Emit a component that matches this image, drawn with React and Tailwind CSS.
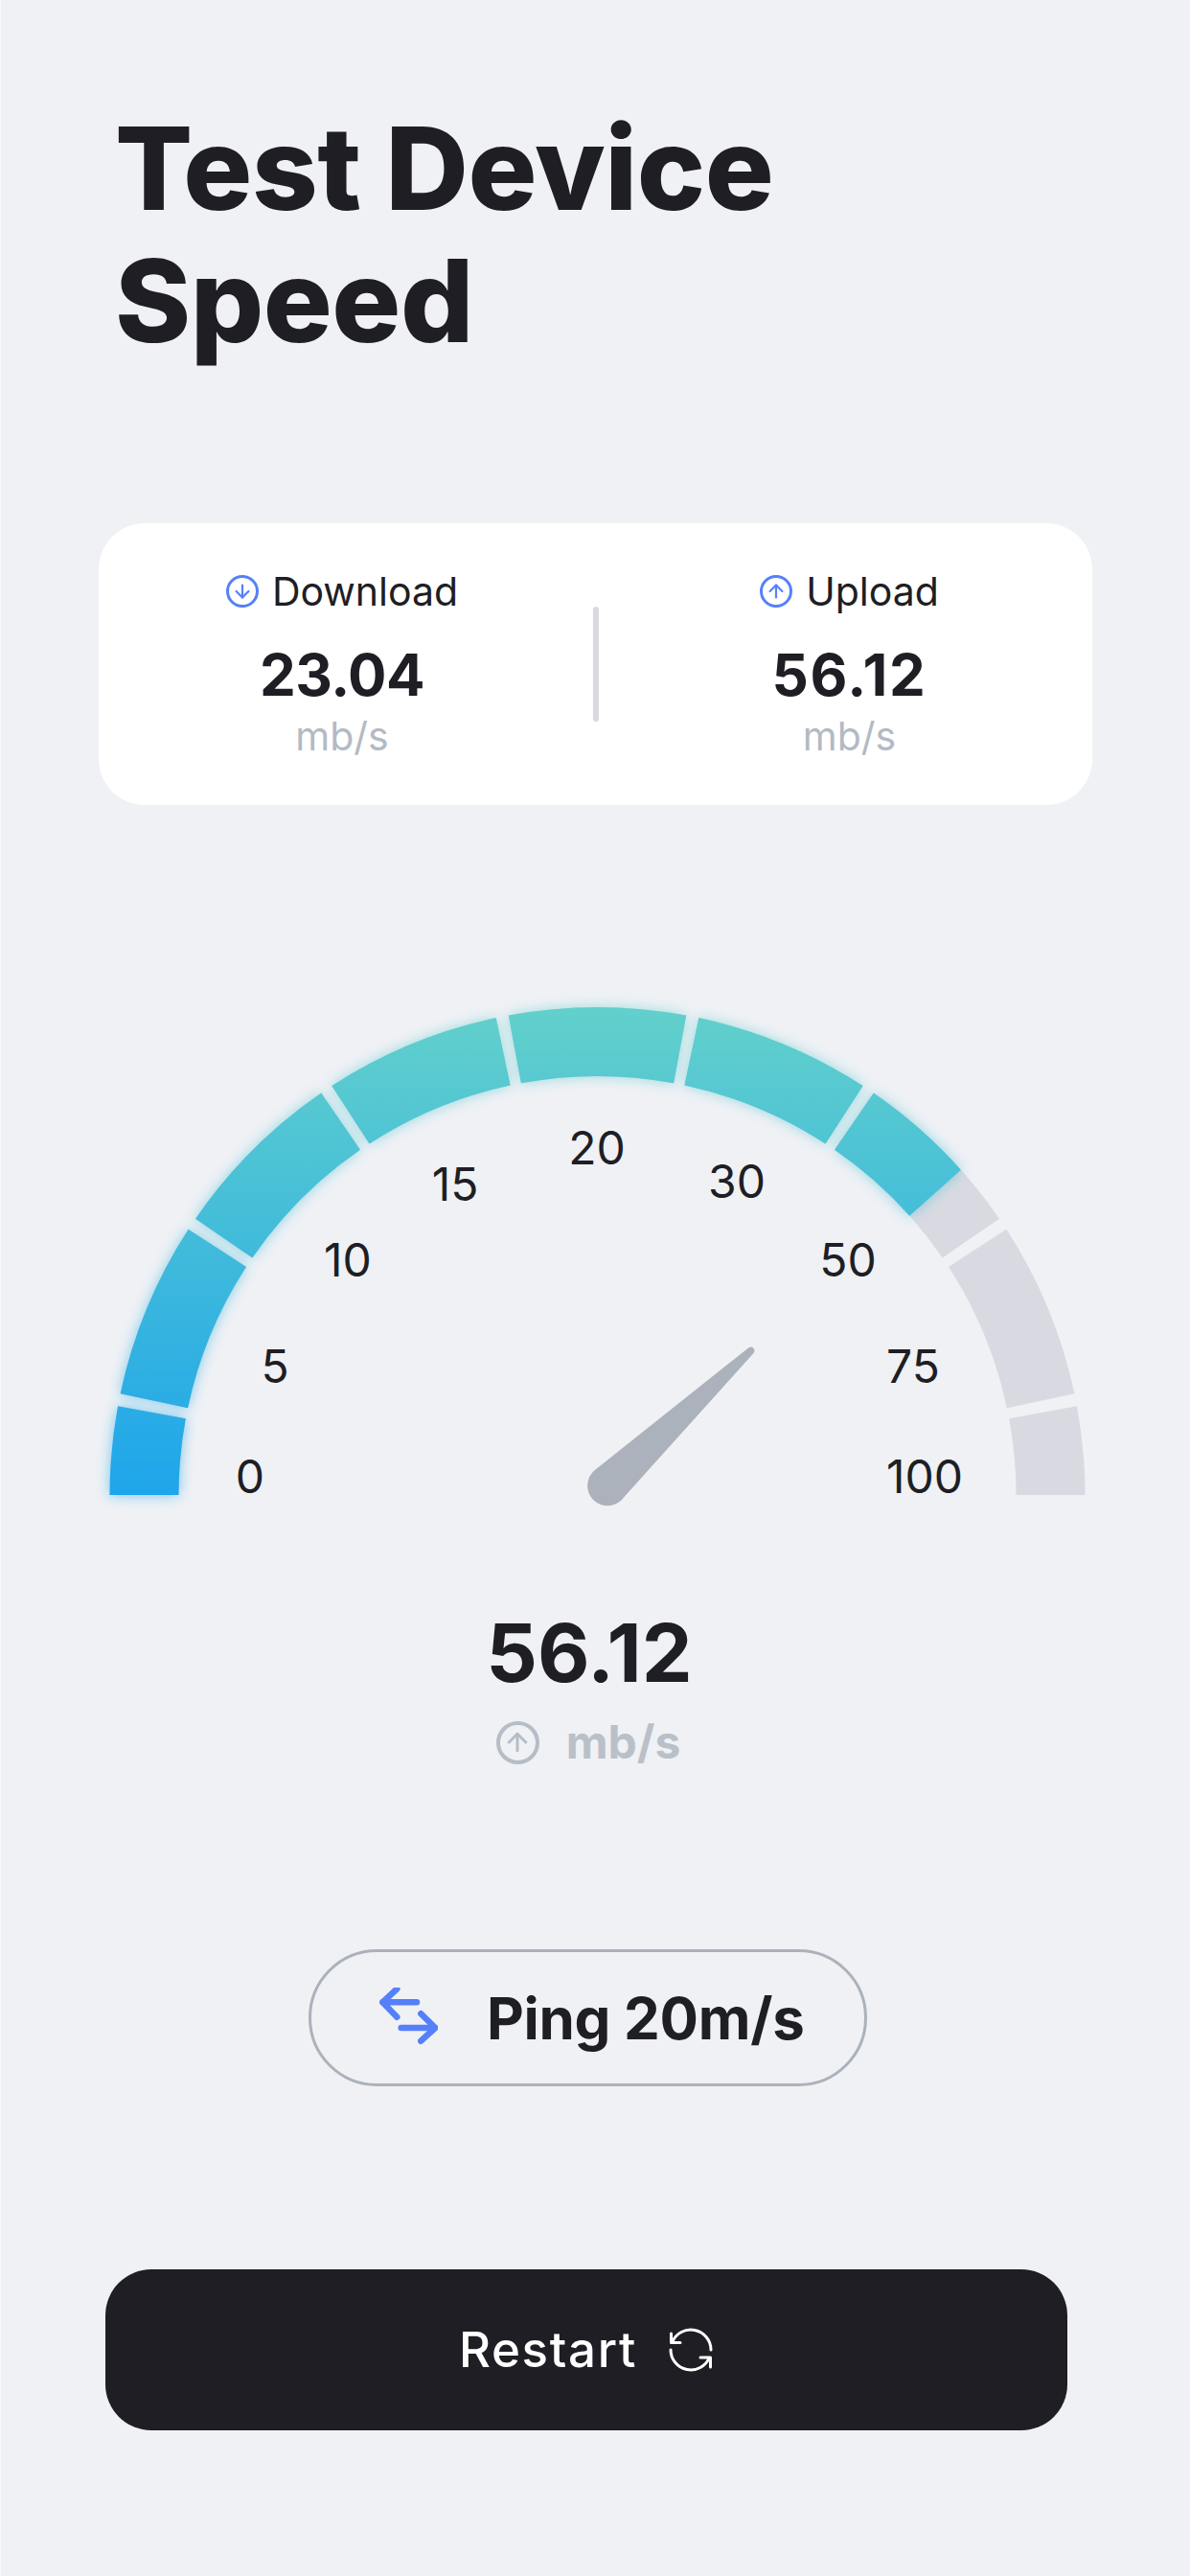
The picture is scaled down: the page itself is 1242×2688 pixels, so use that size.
import { ArrowDown, ArrowUp } from "lucide-react";

const CX = 623.5;
const CY = 1560;
const R_OUT = 509;
const R_IN = 437;

// point on the ring, angle in degrees measured clockwise from the left end
function polar(r, deg) {
  const a = (deg * Math.PI) / 180;
  return [CX - r * Math.cos(a), CY - r * Math.sin(a)];
}

function band(from, to) {
  const [x1, y1] = polar(R_OUT, from);
  const [x2, y2] = polar(R_OUT, to);
  const [x3, y3] = polar(R_IN, to);
  const [x4, y4] = polar(R_IN, from);
  return `M${x1} ${y1}A${R_OUT} ${R_OUT} 0 0 1 ${x2} ${y2}L${x3} ${y3}A${R_IN} ${R_IN} 0 0 0 ${x4} ${y4}Z`;
}

const GAP = 0.75;
const TRACK = [
  [0, 11.25 - GAP],
  [11.25 + GAP, 33.75 - GAP],
  [33.75 + GAP, 56.25 - GAP],
  [56.25 + GAP, 78.75 - GAP],
  [78.75 + GAP, 101.25 - GAP],
  [101.25 + GAP, 123.75 - GAP],
  [123.75 + GAP, 146.25 - GAP],
  [146.25 + GAP, 168.75 - GAP],
  [168.75 + GAP, 180],
];
const ACTIVE_END = 138.2;
const ACTIVE = TRACK.filter(([from]) => from < ACTIVE_END).map(([from, to]) => [from, Math.min(to, ACTIVE_END)]);

const TICKS = [
  ["0", 261, 1558],
  ["5", 287, 1443],
  ["10", 363, 1332],
  ["15", 475, 1253],
  ["20", 623, 1215],
  ["30", 769, 1250],
  ["50", 885, 1332],
  ["75", 953, 1443],
  ["100", 965, 1558],
];

function Gauge() {
  return (
    <svg viewBox="0 1030 1242 550" className="mt-[190px] -ml-px block h-[550px] w-[1242px] shrink-0">
      <defs>
        <linearGradient id="speedFill" gradientUnits="userSpaceOnUse" x1="0" y1="1560" x2="0" y2="1051">
          <stop offset="0" stopColor="#1ea5eb" />
          <stop offset="1" stopColor="#62d0cb" />
        </linearGradient>
        <filter id="speedGlow" x="-10%" y="-10%" width="120%" height="120%">
          <feGaussianBlur stdDeviation="7" />
        </filter>
      </defs>
      {TRACK.map(([from, to]) => (
        <path key={from} d={band(from, to)} fill="#d9dae1" />
      ))}
      <path d={ACTIVE.map(([from, to]) => band(from, to)).join("")} fill="url(#speedFill)" filter="url(#speedGlow)" opacity="0.6" />
      <path d={ACTIVE.map(([from, to]) => band(from, to)).join("")} fill="url(#speedFill)" />
      {TICKS.map(([label, x, y]) => (
        <text key={label} x={x} y={y} textAnchor="middle" fill="#1e1e24" fontSize="48" fontFamily="Inter, sans-serif">
          {label}
        </text>
      ))}
      {/* needle */}
      <path d="M781.7 1406L621.7 1533.3A21 21 0 1 0 651.7 1561.7L786.7 1411.7A3.9 3.9 0 0 0 781.7 1406Z" fill="#abb2bb" />
    </svg>
  );
}

function SpeedStat({ icon: Icon, label, value, className, valueClass }) {
  return (
    <div className={`flex flex-col items-center ${className}`}>
      <div className="-mt-[2px] flex h-[50px] items-center gap-[14px] text-[41px] leading-[50px] text-[#1e1e24]">
        <span className="flex h-[34px] w-[34px] items-center justify-center rounded-full border-[3px] border-[#5580fa]">
          <Icon className="h-[22px] w-[22px] text-[#5580fa]" strokeWidth={2.4} />
        </span>
        {label}
      </div>
      <div className={`mt-[26px] text-[60px] leading-[72px] font-bold text-[#1e1e24] ${valueClass}`}>{value}</div>
      <div className="mt-[3px] text-[41px] leading-[50px] text-[#b3bac4]">mb/s</div>
    </div>
  );
}

export default function App() {
  return (
    <div className="flex h-[2688px] w-[1242px] flex-col border-l border-[#fafafc] bg-[#eff1f5] font-['Inter',sans-serif]">
      <h1 className="mt-[107px] ml-[119px] text-[120px] leading-[138px] font-extrabold tracking-[-0.5px] text-[#1e1e24]">
        Test Device
        <br />
        Speed
      </h1>

      <div className="mt-[163px] ml-[102px] flex h-[294px] w-[1037px] shrink-0 items-center rounded-[48px] bg-white">
        <SpeedStat icon={ArrowDown} label="Download" value="23.04" className="w-[516px] pr-[8px]" valueClass="tracking-[-0.5px]" />
        <div className="h-[120px] w-[6px] shrink-0 rounded-full bg-[#d9dae1]" />
        <SpeedStat icon={ArrowUp} label="Upload" value="56.12" className="w-[515px] pl-[8px]" valueClass="tracking-[1.6px]" />
      </div>

      <Gauge />

      <div className="mt-[95px] ml-[1px] w-[1226px] shrink-0 text-center text-[84px] leading-[100px] font-bold text-[#1e1e24]">56.12</div>
      <div className="mt-[15px] flex w-[1226px] shrink-0 items-center justify-center gap-[28px]">
        <span className="flex h-[45px] w-[45px] items-center justify-center rounded-full border-[4px] border-[#b6bdc6]">
          <ArrowUp className="h-[30px] w-[30px] text-[#b6bdc6]" strokeWidth={2.4} />
        </span>
        <span className="text-[48px] leading-[56px] font-bold text-[#b9c0c8]">mb/s</span>
      </div>

      <div className="mt-[188px] ml-[321px] flex h-[143px] w-[583px] shrink-0 items-center rounded-full border-[3px] border-[#abb2bb]">
        <svg viewBox="0 0 64 64" className="ml-[68px] h-[64px] w-[64px] shrink-0" fill="none" stroke="#5580fa" strokeWidth="6.5" strokeLinecap="round" strokeLinejoin="round">
          <path d="M6.3 15.3H42M21.3 1.3L6.3 15.3L21.3 30.7" />
          <path d="M25.7 42H61.3M46.3 27.3L61.3 42L46.3 55.7" />
        </svg>
        <span className="ml-[51px] text-[60px] leading-[72px] font-bold tracking-[-0.3px] text-[#1e1e24]">Ping 20m/s</span>
      </div>

      <div className="mt-[191px] ml-[109px] flex h-[168px] w-[1004px] shrink-0 items-center justify-center gap-[32px] rounded-[48px] bg-[#1e1e24]">
        <span className="text-[51px] leading-[60px] font-medium tracking-[1.7px] text-white">Restart</span>
        <svg viewBox="26 26 48 48" className="h-[48px] w-[48px] shrink-0" fill="none" stroke="white" strokeWidth="3" strokeLinecap="round" strokeLinejoin="round">
          <path d="M29.5 33V42.5H39M30.6 42A21 21 0 0 1 71 50" />
          <path d="M70.5 68V58H60M69.4 58A21 21 0 0 1 29 50" />
        </svg>
      </div>
    </div>
  );
}
